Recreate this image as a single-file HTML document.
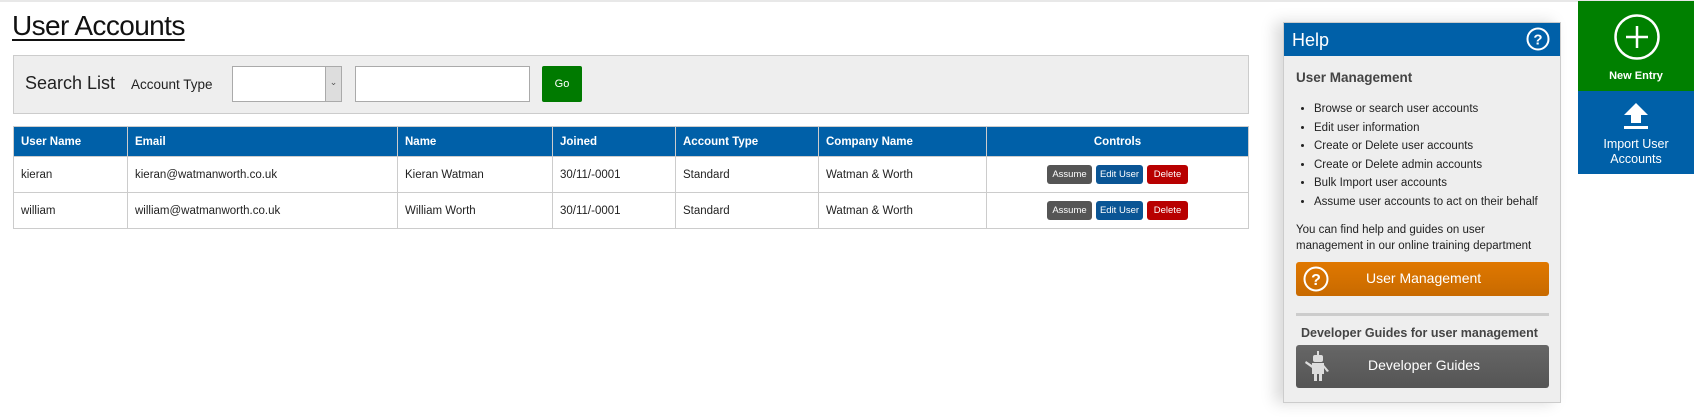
<!DOCTYPE html>
<html><head><meta charset="utf-8"><style>
*{box-sizing:border-box;margin:0;padding:0}
body{width:1694px;height:419px;background:#fff;font-family:"Liberation Sans",sans-serif;position:relative;overflow:hidden;color:#222}
.abs{position:absolute}
.topline{left:0;top:0;width:1694px;height:2px;background:#e8e8e8}
h1{position:absolute;left:12px;top:10px;font-size:28px;font-weight:normal;letter-spacing:-0.6px;text-decoration:underline;text-decoration-thickness:2px;text-underline-offset:4px;color:#111}
.search{left:13px;top:55px;width:1236px;height:59px;background:#eee;border:1px solid #ccc}
table{position:absolute;left:13px;top:126px;width:1236px;border-collapse:collapse;font-size:11.5px;table-layout:fixed}
th{background:#0060a8;color:#fff;text-align:left;height:30px;padding-left:7px;font-size:11.5px;border:1px solid #ccc}
td{height:36px;padding-left:7px;border:1px solid #ccc}
.b{display:inline-flex;align-items:center;justify-content:center;vertical-align:middle;color:#fff;font-size:9.5px;height:19px;border-radius:3px;margin:0 2px}
.help{left:1283px;top:22px;width:278px;height:381px;background:#eee;border:1px solid #ccc;box-shadow:-8px 0 14px rgba(0,0,0,.15)}
.hh{height:33px;background:#0060a8;color:#fff;font-size:18px;padding:7px 0 0 8px;position:relative}
ul{position:absolute;left:30px;top:77px;font-size:11.5px;line-height:18.6px;list-style:disc}
</style></head><body>
<div class="abs topline"></div>
<h1>User Accounts</h1>
<div class="abs search">
 <div class="abs" style="left:11px;top:17px;font-size:18px">Search List</div>
 <div class="abs" style="left:117px;top:21px;font-size:13.5px">Account Type</div>
 <div class="abs" style="left:218px;top:10px;width:110px;height:36px;background:#fff;border:1px solid #aaa"><div class="abs" style="right:0;top:0;width:16px;height:34px;background:#ddd;border-left:1px solid #aaa;font-size:9px;text-align:center;line-height:30px;color:#555">&#8964;</div></div>
 <div class="abs" style="left:341px;top:10px;width:175px;height:36px;background:#fff;border:1px solid #aaa"></div>
 <div class="abs" style="left:528px;top:10px;width:40px;height:36px;background:#007a00;border-radius:2px;color:#fff;font-size:11px;text-align:center;line-height:36px">Go</div>
</div>
<table>
<tr><th style="width:114px">User Name</th><th style="width:270px">Email</th><th style="width:155px">Name</th><th style="width:123px">Joined</th><th style="width:143px">Account Type</th><th style="width:168px">Company Name</th><th style="text-align:center;padding:0">Controls</th></tr>
<tr><td>kieran</td><td>kieran@watmanworth.co.uk</td><td>Kieran Watman</td><td>30/11/-0001</td><td>Standard</td><td>Watman &amp; Worth</td><td style="text-align:center;padding:0"><span class="b" style="background:#555;width:45px">Assume</span><span class="b" style="background:#0a5595;width:47px">Edit User</span><span class="b" style="background:#b80000;width:41px">Delete</span></td></tr>
<tr><td>william</td><td>william@watmanworth.co.uk</td><td>William Worth</td><td>30/11/-0001</td><td>Standard</td><td>Watman &amp; Worth</td><td style="text-align:center;padding:0"><span class="b" style="background:#555;width:45px">Assume</span><span class="b" style="background:#0a5595;width:47px">Edit User</span><span class="b" style="background:#b80000;width:41px">Delete</span></td></tr>
</table>
<div class="abs help">
 <div class="hh">Help<svg class="abs" style="right:10px;top:4px" width="24" height="24" viewBox="0 0 24 24"><circle cx="12" cy="12" r="10.5" fill="none" stroke="#fff" stroke-width="2"/><text x="12" y="17.5" text-anchor="middle" fill="#fff" font-size="15" font-weight="bold" font-family="Liberation Sans">?</text></svg></div>
 <div class="abs" style="left:12px;top:47px;font-size:13.5px;font-weight:bold;color:#444">User Management</div>
 <ul><li>Browse or search user accounts</li><li>Edit user information</li><li>Create or Delete user accounts</li><li>Create or Delete admin accounts</li><li>Bulk Import user accounts</li><li>Assume user accounts to act on their behalf</li></ul>
 <div class="abs" style="left:12px;top:199px;font-size:11.5px;line-height:16px">You can find help and guides on user<br>management in our online training department</div>
 <div class="abs" style="left:12px;top:239px;width:253px;height:34px;background:linear-gradient(#e07800,#c86a00);border-radius:3px;color:#fff;font-size:14px">
  <svg class="abs" style="left:7px;top:4px" width="26" height="26" viewBox="0 0 26 26"><circle cx="13" cy="13" r="11.5" fill="none" stroke="#fff" stroke-width="2"/><text x="13" y="19" text-anchor="middle" fill="#fff" font-size="16" font-weight="bold" font-family="Liberation Sans">?</text></svg>
  <div class="abs" style="left:70px;top:8px">User Management</div></div>
 <div class="abs" style="left:12px;top:290px;width:253px;height:3px;background:#ccc"></div>
 <div class="abs" style="left:17px;top:303px;font-size:12.5px;font-weight:bold;color:#444">Developer Guides for user management</div>
 <div class="abs" style="left:12px;top:322px;width:253px;height:43px;background:linear-gradient(#666,#555);border-radius:3px;color:#fff;font-size:14px">
  <svg class="abs" style="left:8px;top:6px" width="28" height="32" viewBox="0 0 28 32" fill="#ddd"><rect x="13" y="0" width="2" height="4"/><rect x="9" y="4" width="10" height="7" rx="2"/><rect x="8" y="12" width="12" height="11"/><rect x="10" y="23" width="3" height="7"/><rect x="15" y="23" width="3" height="7"/><path d="M8 14 L2 10 L1 12 L8 17Z M20 14 L25 20 L23 21 L20 17Z"/></svg>
  <div class="abs" style="left:72px;top:12px">Developer Guides</div></div>
</div>
<div class="abs" style="left:1578px;top:1px;width:116px;height:90px;background:#008000;color:#fff">
 <svg class="abs" style="left:35px;top:12px" width="48" height="48" viewBox="0 0 48 48"><circle cx="24" cy="24" r="21.5" fill="none" stroke="#fff" stroke-width="2.5"/><path d="M24 13V35M13 24H35" stroke="#fff" stroke-width="2.5"/></svg>
 <div class="abs" style="left:0;width:116px;top:69px;text-align:center;font-size:11px;font-weight:bold">New Entry</div>
</div>
<div class="abs" style="left:1578px;top:91px;width:116px;height:83px;background:#0060a8;color:#fff">
 <svg class="abs" style="left:45px;top:12px" width="26" height="28" viewBox="0 0 26 28" fill="#fff"><path d="M13 0 L25 12 H18 V20 H8 V12 H1Z"/><rect x="1" y="23" width="24" height="3"/></svg>
 <div class="abs" style="left:0;width:116px;top:46px;text-align:center;font-size:12.5px;line-height:15px">Import User<br>Accounts</div>
</div>
</body></html>
